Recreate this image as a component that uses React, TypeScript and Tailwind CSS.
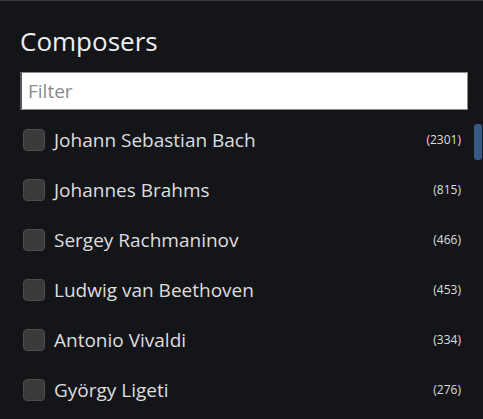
const composers = [
  { name: "Johann Sebastian Bach", count: 2301 },
  { name: "Johannes Brahms", count: 815 },
  { name: "Sergey Rachmaninov", count: 466 },
  { name: "Ludwig van Beethoven", count: 453 },
  { name: "Antonio Vivaldi", count: 334 },
  { name: "György Ligeti", count: 276 },
];

const App = () => {
  return (
    <div
      className="h-screen flex flex-col bg-[#141519] border-t border-[#3c3d41] text-[#e6e6e6] overflow-hidden"
      style={{ fontFamily: '"Open Sans", "DejaVu Sans", sans-serif' }}
    >
      <h1 className="pl-5 pt-[22px] text-[26px] leading-[36px] text-[#eeeeee]">
        Composers
      </h1>
      <div className="pl-5 pr-[15px] mt-[13px]">
        <input
          placeholder="Filter"
          className="w-full h-[38px] bg-white border border-[#8a8a8a] border-l-2 border-l-[#55565a] px-[6px] text-[19px] text-[#222] placeholder:text-[#8a8a8a] outline-none"
        />
      </div>
      <div className="relative flex-1 mt-[5px] overflow-hidden">
        <div className="absolute right-[1px] top-[9px] w-[8px] h-[36px] rounded-[3px] bg-[#385983]" />
        <ul>
          {composers.map((c) => (
            <li key={c.name} className="flex items-center h-[50px] pl-[23px] pr-[22px]">
              <span className="w-[22px] h-[22px] rounded-[4px] bg-[#3a3a3b] border border-[#4d4d4f] shrink-0" />
              <span className="ml-[9px] text-[19px] leading-[26px] text-[#dedede] flex-1 whitespace-nowrap">
                {c.name}
              </span>
              <span className="text-[12px] text-[#dedede]">({c.count})</span>
            </li>
          ))}
        </ul>
      </div>
    </div>
  );
};

export default App;
